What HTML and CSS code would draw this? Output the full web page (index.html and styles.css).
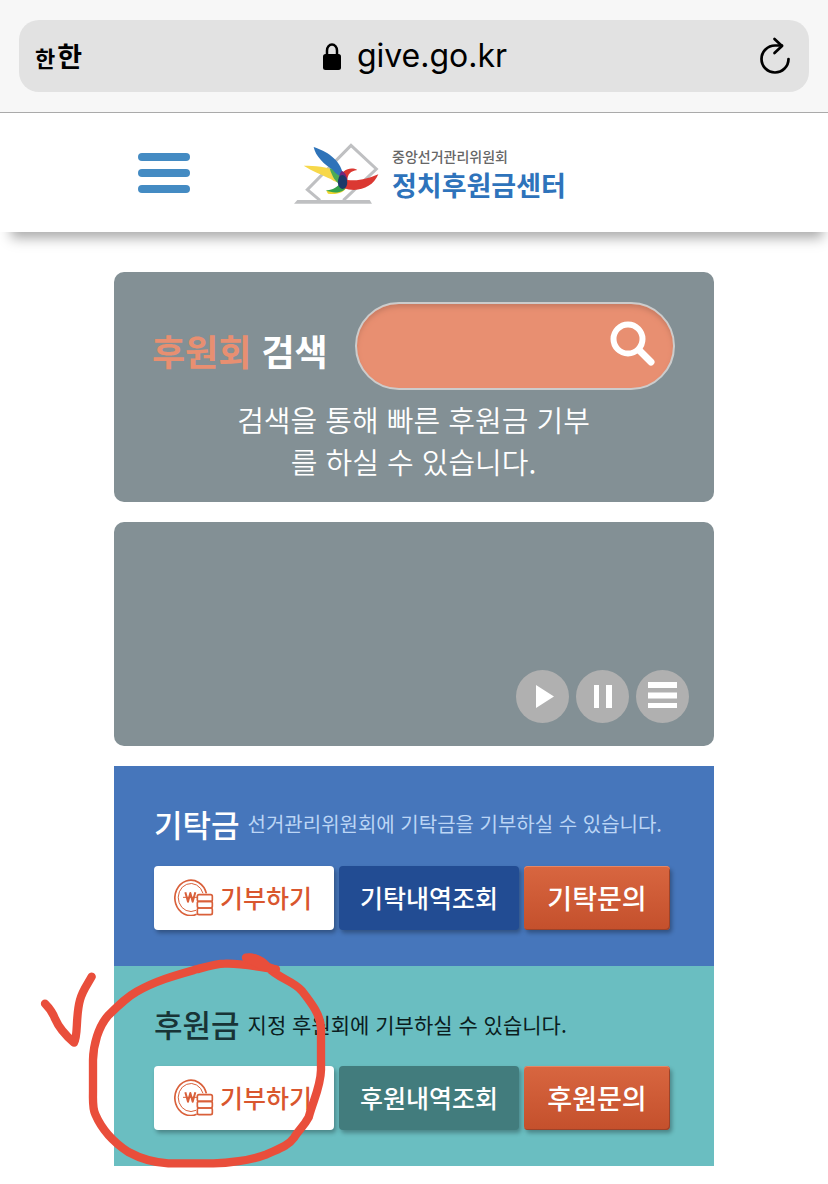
FILE: index.html
```html
<!DOCTYPE html>
<html lang="ko">
<head>
<meta charset="utf-8">
<meta name="viewport" content="width=device-width, initial-scale=1">
<title>정치후원금센터</title>
<link rel="stylesheet" href="styles.css">
</head>
<body>
<svg class="symbols" aria-hidden="true">
  <symbol id="coins" viewBox="0 0 120 114">
    <g fill="none" stroke="#d9603a" stroke-width="5" stroke-linejoin="round">
      <path d="M97 46A48 53 0 1 0 68 109"/>
      <path d="M87 46A38 42 0 1 0 66 97" stroke-width="3"/>
      <path d="M34 43L42 71L49 45L56 71L64 43" stroke-width="6"/>
      <path d="M27 58H71" stroke-width="3"/>
      <rect x="70" y="50" width="45" height="20" rx="5"/>
      <rect x="70" y="70" width="45" height="20" rx="5"/>
      <rect x="70" y="90" width="45" height="20" rx="5"/>
    </g>
  </symbol>
</svg>

<div class="browser-bar">
  <div class="address">
    <button class="text-size" type="button" aria-label="글자 크기"><span class="text-size-small">한</span><span>한</span></button>
    <div class="url">
      <svg class="lock" viewBox="0 0 18 27" aria-hidden="true">
        <path d="M4 13V7.500a5 6 0 0 1 10 0V13" fill="none" stroke="#000" stroke-width="2.500"/>
        <rect x="0" y="11" width="18" height="16" rx="2.500"/>
      </svg>
      <span>give.go.kr</span>
    </div>
    <button class="reload" type="button" aria-label="새로고침">
      <svg viewBox="0 0 32 38" aria-hidden="true">
        <g fill="none" stroke="#000" stroke-width="2.700" stroke-linecap="round" stroke-linejoin="round">
          <path d="M29.500 22A13.500 13.500 0 1 1 16 8.500H23"/>
          <path d="M15.500 2L23 9L15.500 16"/>
        </g>
      </svg>
    </button>
  </div>
</div>

<header class="site-header">
  <div class="header-inner">
    <button class="menu" type="button" aria-label="메뉴"><i></i><i></i><i></i></button>
    <a class="logo" href="#">
      <svg class="logo-mark" viewBox="42 40 255 183" aria-hidden="true">
        <path d="M120 212L82 180L213 47L289 118L190 212" fill="none" stroke="#bfc0c2" stroke-width="9"/>
        <path d="M52 211H269L276 222H42Z" fill="#bfc0c2"/>
        <path d="M71 108C105 108 140 110 172 125L186 160C176 160 162 156 152 148C130 137 94 123 71 108Z" fill="#f7d84a"/>
        <path d="M139 183C160 183 175 177 184 166L200 172C193 188 171 196 144 192Z" fill="#f1d530"/>
        <path d="M149 116C172 117 189 123 195 140L180 164C166 157 156 140 149 116Z" fill="#4cab55"/>
        <path d="M137 182C157 182 169 174 179 163L201 168C196 187 166 195 137 182Z" fill="#34a24a"/>
        <path d="M101 52C137 64 181 88 189 134C180 143 170 135 158 120C133 105 106 79 101 52Z" fill="#2e73b9"/>
        <path d="M178 148C184 122 211 109 232 121C211 124 203 134 202 151C238 155 263 147 295 134C278 175 232 190 190 175Z" fill="#db3832"/>
        <path d="M186 124C195 128 201 140 202 151L180 150C175 142 179 130 186 124Z" fill="#75257a"/>
        <path d="M177 143C183 132 194 135 199 146C206 163 199 177 188 178C174 176 170 158 177 143Z" fill="#1c3a69"/>
      </svg>
      <span class="logo-text"><span class="logo-org">중앙선거관리위원회</span><span class="logo-name">정치후원금센터</span></span>
    </a>
  </div>
</header>

<main class="content">
  <form class="card search-card">
    <div class="search-row">
      <label class="search-label" for="keyword"><em>후원회</em> 검색</label>
      <div class="search-field">
        <input id="keyword" type="text">
        <button type="submit" aria-label="검색">
          <svg viewBox="0 0 46 46" aria-hidden="true">
            <circle cx="18" cy="18" r="14.500" fill="none" stroke="#fff" stroke-width="6"/>
            <path d="M29 29L41 41" stroke="#fff" stroke-width="7" stroke-linecap="round"/>
          </svg>
        </button>
      </div>
    </div>
    <p class="search-help">검색을 통해 빠른 후원금 기부<br>를 하실 수 있습니다.</p>
  </form>

  <section class="card slider-card" aria-label="알림">
    <button type="button" aria-label="재생"><svg viewBox="0 0 53 53" aria-hidden="true"><path d="M20 15L38 26.500L20 38Z" fill="#fff"/></svg></button>
    <button type="button" aria-label="정지"><svg viewBox="0 0 53 53" aria-hidden="true"><path d="M18 15h5v23h-5zM30 15h6v23h-6z" fill="#fff"/></svg></button>
    <button type="button" aria-label="목록"><svg viewBox="0 0 53 53" aria-hidden="true"><path d="M12 12h29v6H12zM12 22.500h29v6H12zM12 33h29v5H12z" fill="#fff"/></svg></button>
  </section>

  <div class="panels">
    <section class="panel panel-deposit">
      <div class="panel-head"><h2>기탁금</h2><p>선거관리위원회에 기탁금을 기부하실 수 있습니다.</p></div>
      <div class="panel-actions">
        <a class="action action-give" href="#"><svg viewBox="0 0 120 114" aria-hidden="true"><use href="#coins"/></svg>기부하기</a>
        <a class="action action-history" href="#">기탁내역조회</a>
        <a class="action action-ask" href="#">기탁문의</a>
      </div>
    </section>
    <section class="panel panel-support">
      <div class="panel-head"><h2>후원금</h2><p>지정 후원회에 기부하실 수 있습니다.</p></div>
      <div class="panel-actions">
        <a class="action action-give" href="#"><svg viewBox="0 0 120 114" aria-hidden="true"><use href="#coins"/></svg>기부하기</a>
        <a class="action action-history" href="#">후원내역조회</a>
        <a class="action action-ask" href="#">후원문의</a>
      </div>
      <svg class="marker" viewBox="0 0 960 720" aria-hidden="true">
        <g fill="none" stroke="#e94e3b" stroke-width="25" stroke-linecap="round" stroke-linejoin="round">
          <path d="M45 191C62 208 69 220 75 236C87 264 111 290 132 308C145 288 136 230 150 180C158 150 174 131 185 110"/>
          <path d="M648 53C676 48 694 66 712 80C745 116 790 122 816 153C846 191 872 226 873 265V390C872 440 850 480 836 532C820 562 804 572 793 592C774 619 741 628 710 643C660 662 590 670 550 670H415C375 668 330 655 295 636C251 607 214 565 196 523C187 505 189 480 189 455V360C190 315 205 260 234 227C270 192 290 172 320 155C380 121 440 105 500 88C540 77 560 71 585 71C640 69 690 82 738 88"/>
        </g>
        <path d="M640 46C665 33 700 47 720 70L748 80L738 99L700 92L646 66Z" fill="#e94e3b"/>
      </svg>
    </section>
  </div>
</main>
</body>
</html>
```

FILE: styles.css
```css
* {
  box-sizing: border-box;
}

body {
  margin: 0;
  background: #fff;
  font-family: "Noto Sans CJK KR", sans-serif;
}

button {
  padding: 0;
  border: 0;
  background: none;
  color: inherit;
  font: inherit;
}

a {
  color: inherit;
  text-decoration: none;
}

svg {
  display: block;
}

.symbols {
  display: none;
}

/* Browser bar */
.browser-bar {
  padding: 20px 19px;
  border-bottom: 1px solid #aaa;
  background: #f7f7f7;
}

.address {
  display: flex;
  align-items: center;
  justify-content: space-between;
  height: 72px;
  padding: 0 18px 0 16px;
  border-radius: 20px;
  background: #e2e2e2;
}

.text-size {
  display: flex;
  align-items: baseline;
  gap: 2px;
  width: 60px;
  font-size: 27px;
  font-weight: 700;
  line-height: 40px;
}

.text-size-small {
  font-size: 22px;
}

.url {
  display: flex;
  align-items: center;
  gap: 16px;
  font-family: Inter, sans-serif;
  font-size: 32px;
  line-height: 40px;
}

.lock {
  width: 18px;
  height: 27px;
}

.reload {
  display: flex;
  justify-content: flex-end;
  width: 56px;
}

.reload svg {
  width: 32px;
  height: 38px;
}

/* Site header */
.site-header {
  position: relative;
  background: #fff;
  box-shadow: 3px 14px 12px -8px #aaa;
}

.header-inner {
  display: flex;
  align-items: center;
  gap: 104px;
  max-width: 600px;
  height: 119px;
  margin: 0 auto;
  padding: 0 24px;
}

.menu {
  display: grid;
  gap: 8px;
  width: 52px;
}

.menu i {
  height: 8px;
  border-radius: 4px;
  background: #448bc3;
}

.logo {
  display: flex;
  align-items: center;
  gap: 13px;
  padding-top: 2px;
}

.logo-mark {
  width: 85px;
  height: 61px;
}

.logo-text {
  display: grid;
  white-space: nowrap;
}

.logo-org {
  color: #666;
  font-size: 14px;
  font-weight: 500;
  line-height: 22px;
}

.logo-name {
  color: #2e73bb;
  font-size: 27px;
  font-weight: 700;
  line-height: 36px;
}

/* Content */
.content {
  display: grid;
  gap: 20px;
  max-width: 600px;
  margin: 0 auto;
  padding: 40px 0 18px;
}

.card {
  border-radius: 10px;
  background: #839095;
}

.search-card {
  padding: 30px 39px 20px 38px;
}

.search-row {
  display: flex;
  align-items: center;
  justify-content: space-between;
}

.search-label {
  padding-top: 8px;
  color: #fff;
  font-size: 36px;
  font-weight: 700;
  line-height: 48px;
  white-space: nowrap;
}

.search-label em {
  color: #e88f71;
  font-style: normal;
}

.search-field {
  display: flex;
  align-items: center;
  width: 320px;
  height: 88px;
  padding: 0 17px 4px 36px;
  border: 2px solid #ccc;
  border-radius: 44px;
  background: #e88f71;
  box-shadow: inset 0 4px 5px -1px #c67b62;
}

.search-field input {
  flex: 1;
  min-width: 0;
  border: 0;
  outline: 0;
  background: transparent;
  color: #fff;
  font: inherit;
  font-size: 29px;
}

.search-field svg {
  width: 46px;
  height: 46px;
}

.search-help {
  margin: 8px 0 0;
  color: #fff;
  font-size: 29px;
  font-weight: 350;
  line-height: 42px;
  text-align: center;
}

.slider-card {
  display: flex;
  align-items: flex-end;
  justify-content: flex-end;
  gap: 7px;
  min-height: 224px;
  padding: 23px 25px;
}

.slider-card button {
  width: 53px;
  height: 53px;
  border-radius: 50%;
  background: #b0b0b0;
}

/* Donation panels */
.panel {
  position: relative;
  padding: 36px 40px;
}

.panel-deposit {
  background: #4676bb;
}

.panel-support {
  background: #6abec1;
}

.panel-head {
  display: flex;
  align-items: center;
  gap: 8px;
  height: 44px;
  margin-bottom: 20px;
  white-space: nowrap;
}

.panel-head h2 {
  margin: 0;
  color: #fff;
  font-size: 31px;
  font-weight: 500;
  line-height: 44px;
}

.panel-head p {
  margin: 0;
  color: #bbd5f5;
  font-size: 20px;
  line-height: 44px;
}

.panel-support h2 {
  color: #183436;
}

.panel-support p {
  color: #0b1d1e;
  font-size: 21px;
}

.panel-actions {
  display: flex;
  gap: 5px;
}

.action {
  display: flex;
  align-items: center;
  justify-content: center;
  gap: 6px;
  width: 180px;
  height: 64px;
  padding-bottom: 2px;
  border-radius: 4px;
  color: #fff;
  font-size: 25px;
  font-weight: 500;
  box-shadow: 2px 3px 4px rgba(0, 0, 0, 0.3);
}

.action svg {
  width: 40px;
  height: 38px;
}

.action-give {
  padding-right: 2px;
  background: #fff;
  color: #d9562e;
}

.action-history {
  background: #224c93;
}

.panel-support .action-history {
  background: #427c7d;
}

.action-ask {
  width: 146px;
  background: linear-gradient(#d86640, #c4502c);
  font-size: 27px;
  box-shadow: inset 0 1px #e58765, inset -1px -1px #9d4329, 2px 3px 4px rgba(0, 0, 0, 0.3);
}

/* Hand-drawn mark over the support panel */
.marker {
  position: absolute;
  top: -26px;
  left: -84px;
  width: 320px;
  height: 240px;
  pointer-events: none;
}
```
